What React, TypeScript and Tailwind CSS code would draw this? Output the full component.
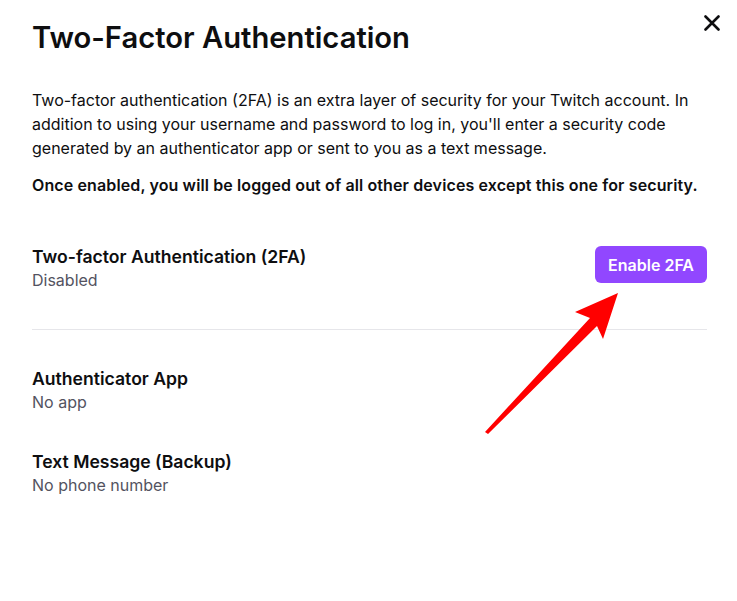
import React from "react";

function Method({ title, detail }: { title: string; detail: string }) {
  return (
    <div>
      <div className="text-[17.6px] leading-6 font-semibold text-[#0e0e10]">{title}</div>
      <div className="text-[16px] leading-[22px] text-[#53535f]">{detail}</div>
    </div>
  );
}

export default function App() {
  return (
    <div
      className="relative w-[737px] h-[601px] bg-white overflow-hidden"
      style={{ fontFamily: "Inter, 'Noto Sans', sans-serif" }}
    >
      <button className="absolute right-[13px] top-[11px] p-1 text-[#0e0e10]" aria-label="Close">
        <svg width="16" height="16" viewBox="0 0 16 16" fill="none">
          <path d="M1.5 1.5L14.5 14.5M14.5 1.5L1.5 14.5" stroke="currentColor" strokeWidth="2.6" strokeLinecap="round" />
        </svg>
      </button>

      <div className="pl-8 pr-[30px] pt-[21px] flex flex-col">
        <h1 className="text-[29.2px] leading-[34px] font-semibold text-[#0e0e10]">
          Two-Factor Authentication
        </h1>

        <p className="mt-[33px] text-[16px] leading-6 text-[#0e0e10]">
          Two-factor authentication (2FA) is an extra layer of security for your Twitch account. In
          addition to using your username and password to log in, you'll enter a security code
          generated by an authenticator app or sent to you as a text message.
        </p>
        <p className="mt-[13px] text-[16px] leading-6 font-semibold tracking-[0.12px] text-[#0e0e10]">
          Once enabled, you will be logged out of all other devices except this one for security.
        </p>

        <div className="mt-[48px] flex items-start justify-between">
          <Method title="Two-factor Authentication (2FA)" detail="Disabled" />
          <button className="mt-px h-[37px] px-[13px] rounded-md bg-[#9147ff] text-white text-[16px] font-semibold">
            Enable 2FA
          </button>
        </div>

        <div className="mt-[38px] h-px bg-[#e6e6ea]" />

        <div className="mt-[37px] flex flex-col gap-[37px]">
          <Method title="Authenticator App" detail="No app" />
          <Method title="Text Message (Backup)" detail="No phone number" />
        </div>
      </div>

      <svg className="absolute left-0 top-0 pointer-events-none" width="737" height="601">
        <polygon
          points="618,293 603,339 597,326 488,434 485,432 590,318 575,312"
          fill="#ff0000"
        />
      </svg>
    </div>
  );
}
